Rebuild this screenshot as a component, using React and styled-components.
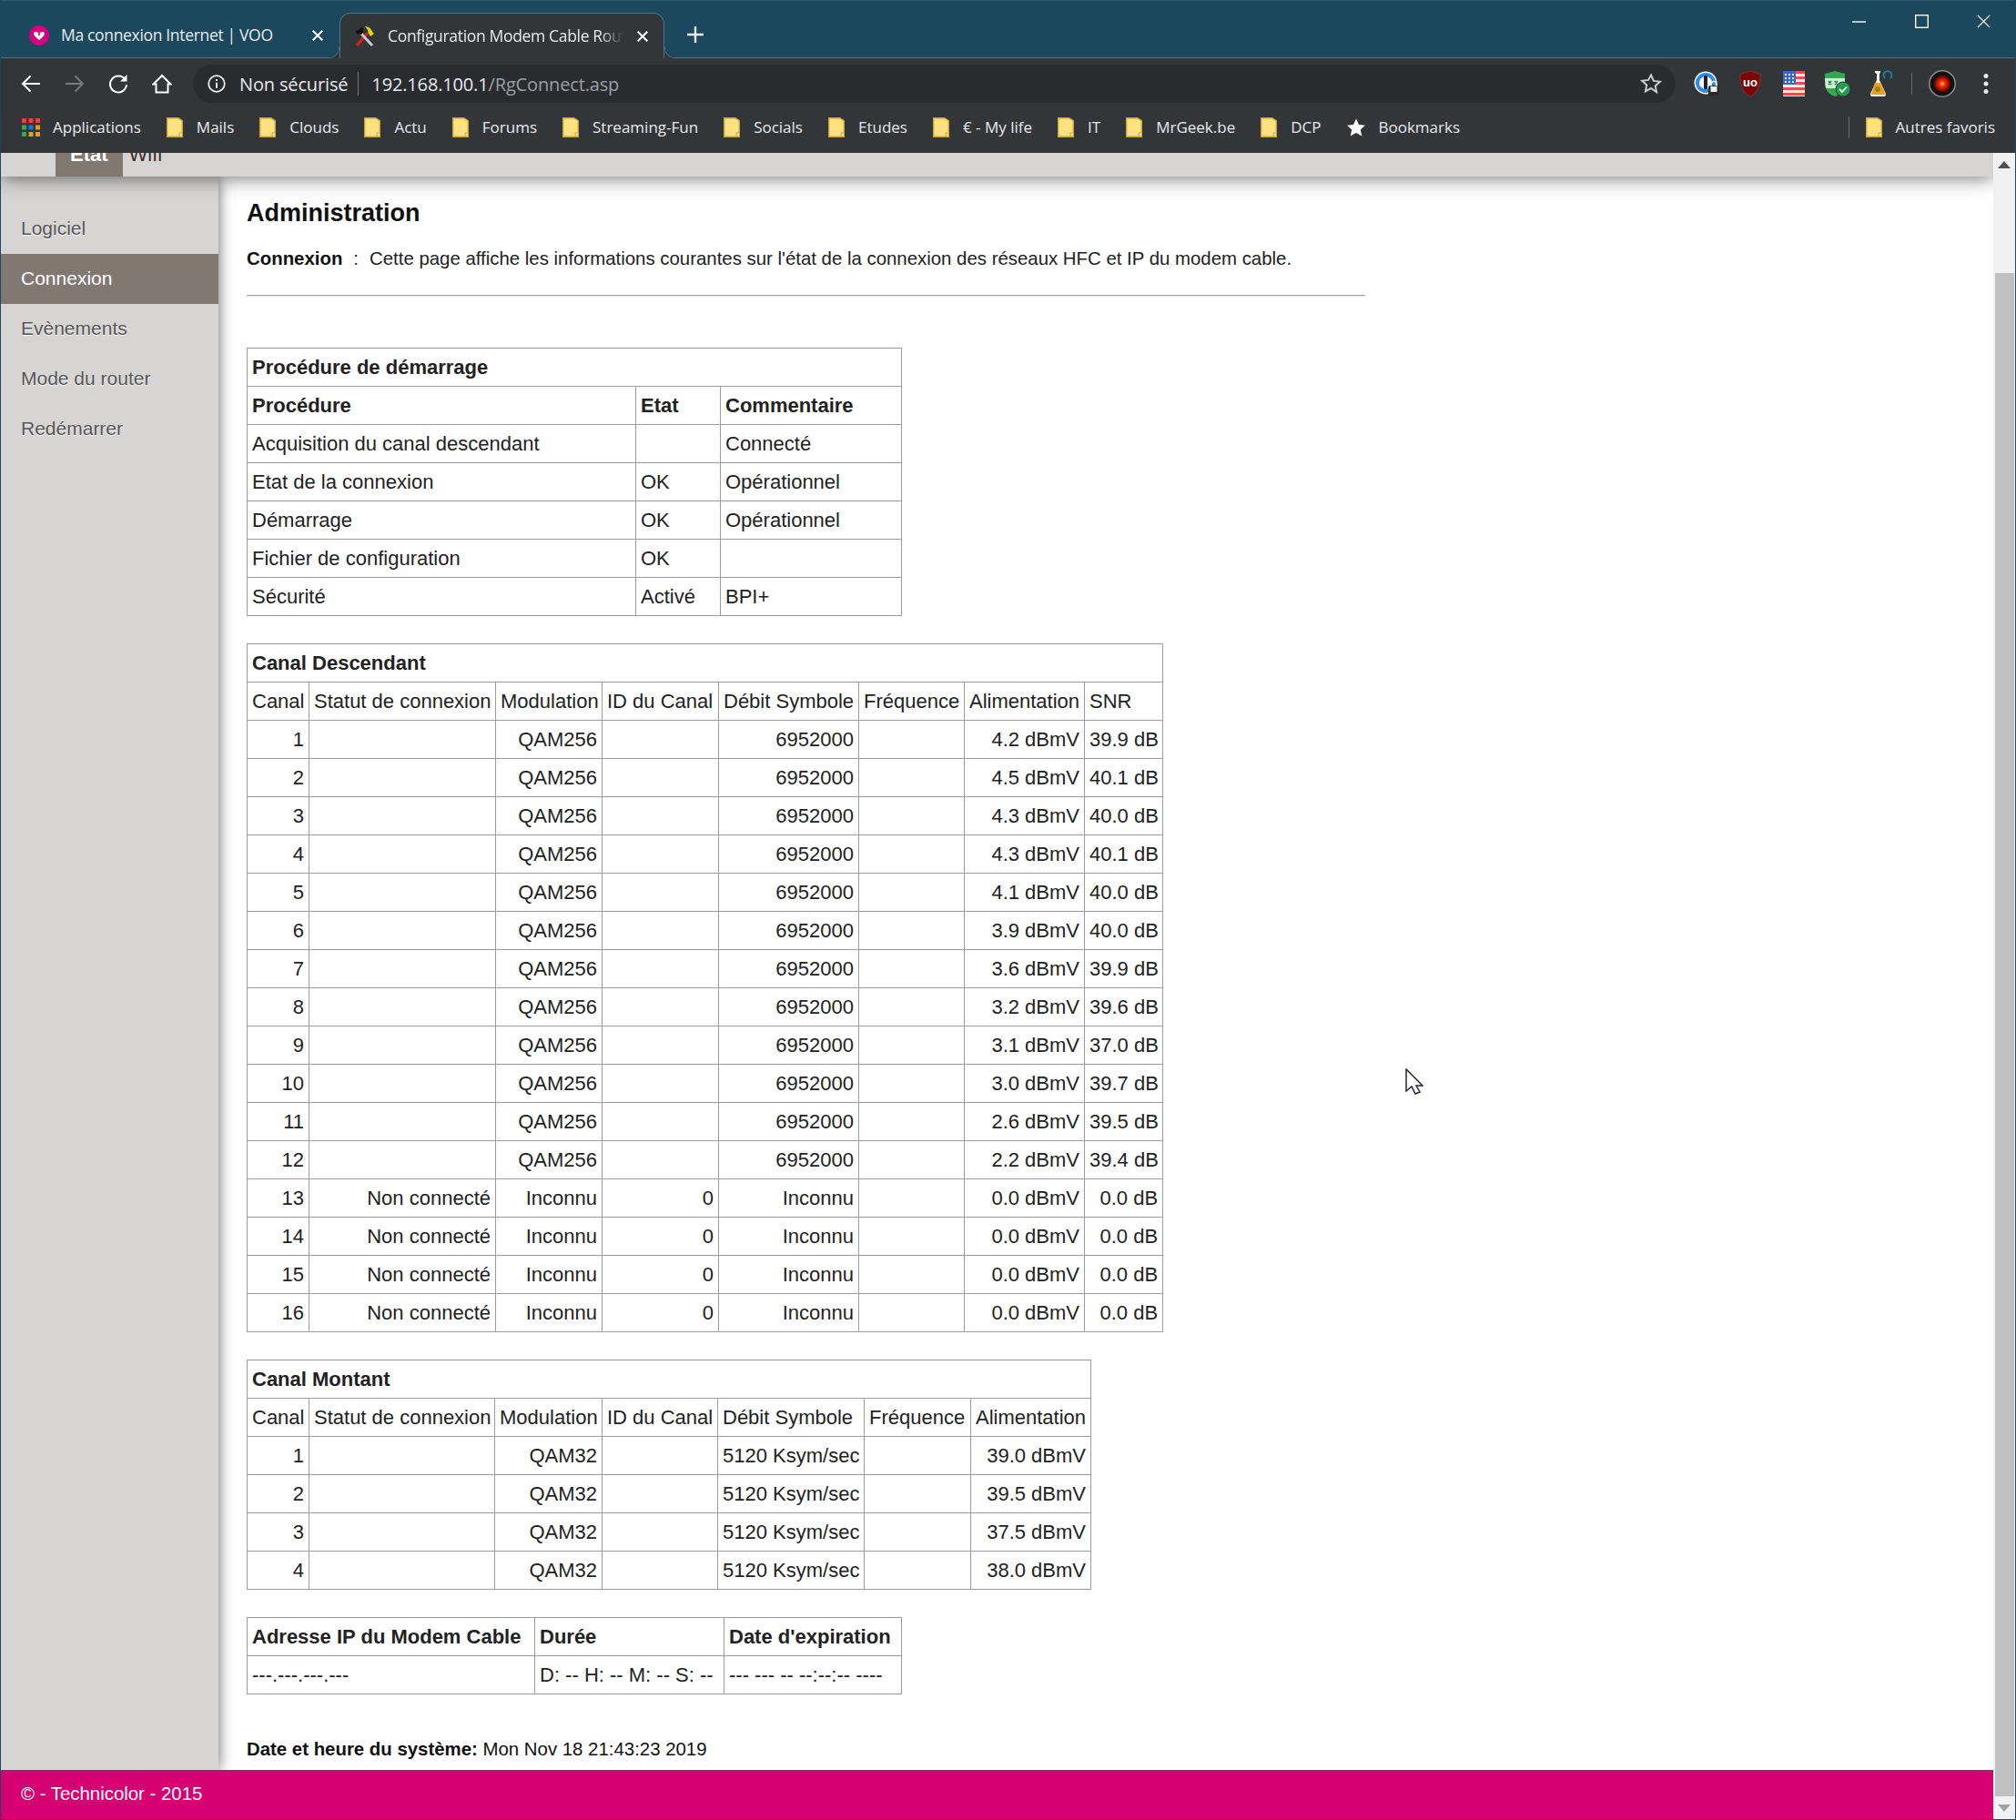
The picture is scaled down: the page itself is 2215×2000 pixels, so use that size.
import React from "react";
import styled, { createGlobalStyle } from "styled-components";

const GlobalStyle = createGlobalStyle`
  html, body {
    margin: 0;
    padding: 0;
    background: #fff;
    overflow: hidden;
  }
  * { box-sizing: border-box; }
`;

const Frame = styled.div`
  width: 2215px;
  height: 2000px;
  display: flex;
  flex-direction: column;
  border: 1px solid #1b485c;
  border-top: 0;
  position: relative;
  overflow: hidden;
`;

// ---- browser chrome

const TabStrip = styled.div`
  height: 64px;
  flex: none;
  display: flex;
  align-items: flex-end;
  padding-left: 15px;
  background: #1b485c;
  border-top: 1px solid #2f5a6e;
  border-bottom: 1px solid #4a7388;
  font-family: "Open Sans", "Noto Sans", sans-serif;
`;

const Tab = styled.div`
  width: 357px;
  height: 50px;
  margin-bottom: ${(p) => (p.$active ? "-1px" : "0")};
  display: flex;
  align-items: center;
  padding: 0 17px 0 15px;
  color: #e8eaed;
  position: relative;
  background: ${(p) => (p.$active ? "#323639" : "transparent")};
  border-radius: 12px 12px 0 0;
  border: ${(p) => (p.$active ? "1px solid #4a7388" : "1px solid transparent")};
  border-bottom: 0;

  ${(p) =>
    p.$active &&
    `
    &:before, &:after {
      content: "";
      position: absolute;
      bottom: 0;
      width: 12px;
      height: 12px;
    }
    &:before {
      left: -13px;
      background: radial-gradient(circle at 0 0, transparent 11px, #4a7388 11.5px, #323639 12.5px);
    }
    &:after {
      right: -13px;
      background: radial-gradient(circle at 100% 0, transparent 11px, #4a7388 11.5px, #323639 12.5px);
    }
  `}
`;

const TabTitle = styled.span`
  flex: 1;
  margin: 0 15px 0 13px;
  padding-bottom: 2px;
  font-size: 17.5px;
  letter-spacing: -0.33px;
  white-space: nowrap;
  overflow: hidden;
  -webkit-mask-image: ${(p) =>
    p.$fade ? "linear-gradient(90deg, #000 90%, transparent)" : "none"};
`;

const NewTab = styled.svg`
  width: 18px;
  height: 18px;
  margin: 0 0 16px 25px;
`;

const WindowControls = styled.div`
  margin-left: auto;
  align-self: flex-start;
  display: flex;
`;

const WindowButton = styled.div`
  width: 68.5px;
  height: 45px;
  display: flex;
  align-items: center;
  justify-content: center;
`;

const Toolbar = styled.div`
  height: 49px;
  flex: none;
  display: flex;
  padding: 7px 8px 0 9px;
  background: #323639;
  font-family: "Open Sans", "Noto Sans", sans-serif;
`;

const ToolButton = styled.div`
  width: 48px;
  height: 42px;
  flex: none;
  display: flex;
  align-items: center;
  justify-content: center;
`;

const Omnibox = styled.div`
  flex: 1;
  height: 42px;
  margin: 0 10px;
  padding: 0 15px 0 16px;
  display: flex;
  align-items: center;
  border-radius: 21px;
  background: #292c2e;
  font-size: 20px;
  letter-spacing: -0.15px;
  color: #e8eaed;
`;

const SecurityLabel = styled.span`
  margin-left: 15px;
`;

const UrlDivider = styled.span`
  width: 1px;
  height: 26px;
  margin: 0 14px 0 11px;
  background: #6f7377;
`;

const UrlPath = styled.span`
  color: #9aa0a6;
`;

const StarButton = styled.svg`
  width: 24px;
  height: 24px;
  margin-left: auto;
`;

const ToolSeparator = styled.span`
  width: 1px;
  height: 24px;
  margin: 9px 9px 0;
  background: #6a6e72;
`;

const BookmarkBar = styled.div`
  height: 55px;
  flex: none;
  display: flex;
  align-items: center;
  gap: 28px;
  padding: 0 22px 2px 23px;
  background: #323639;
  color: #e8eaed;
  font-family: "Open Sans", "Noto Sans", sans-serif;
  font-size: 17px;
`;

const Bookmark = styled.div`
  display: flex;
  align-items: center;
  gap: ${(p) => p.$gap || 15}px;
  white-space: nowrap;
`;

const OtherBookmarks = styled(Bookmark)`
  margin-left: auto;
  padding-left: 18px;
  height: 24px;
  border-left: 1px solid #6a6e72;
`;

// ---- modem page

const PageRow = styled.div`
  flex: 1;
  min-height: 0;
  display: flex;
  font-family: "Liberation Sans", Arial, sans-serif;
`;

const PageColumn = styled.div`
  flex: 1;
  min-width: 0;
  display: flex;
  flex-direction: column;
  overflow: hidden;
`;

const TopNav = styled.div`
  height: 26px;
  flex: none;
  display: flex;
  align-items: flex-end;
  padding-left: 60px;
  background: #d6d5d3;
  box-shadow: 0 0 22px rgba(0, 0, 0, 0.62);
  position: relative;
  z-index: 2;
`;

const TopNavItem = styled.div`
  height: 50px;
  flex: none;
  align-self: flex-end;
  display: flex;
  align-items: flex-end;
  padding: 0 ${(p) => (p.$active ? "16px" : "7px")} 12px;
  font-size: 22px;
  line-height: 24px;
  font-weight: ${(p) => (p.$active ? 700 : 400)};
  color: ${(p) => (p.$active ? "#fff" : "#3d2b28")};
  background: ${(p) => (p.$active ? "#817872" : "transparent")};
`;

const Body = styled.div`
  flex: 1;
  min-height: 0;
  display: flex;
`;

const Sidebar = styled.nav`
  width: 239px;
  flex: none;
  padding-top: 30px;
  background: #d6d5d3;
  box-shadow: 0 0 15px rgba(0, 0, 0, 0.6);
  position: relative;
  z-index: 1;
`;

const SideItem = styled.div`
  height: 55px;
  display: flex;
  align-items: center;
  padding: 0 0 2px 22px;
  font-size: 21px;
  color: ${(p) => (p.$active ? "#fff" : "#555")};
  background: ${(p) => (p.$active ? "#817872" : "transparent")};
  text-shadow: ${(p) => (p.$active ? "none" : "0 1px 1px #fff")};
`;

const Content = styled.main`
  flex: 1;
  min-width: 0;
  padding: 23px 0 0 31px;
  background: #fff;
`;

const Heading = styled.h1`
  margin: 0;
  font-size: 27px;
  line-height: 34px;
  font-weight: 700;
  color: #111;
`;

const Intro = styled.p`
  margin: 19px 0 0;
  font-size: 20.4px;
  line-height: 28px;
  color: #222;
  b {
    color: #111;
    margin-right: 12px;
  }
  span {
    margin-right: 12px;
  }
`;

const Rule = styled.hr`
  width: 1229px;
  height: 2px;
  margin: 26px 0 56px;
  border: 0;
  border-top: 1px solid #a5a5a5;
  border-bottom: 1px solid #e4e4e4;
`;

const DataTable = styled.table`
  border-collapse: collapse;
  table-layout: fixed;
  margin-bottom: ${(p) => (p.$last ? 0 : 30)}px;
  font-size: 22px;
  color: #222;
`;

const Column = styled.col`
  width: ${(p) => p.$w}px;
`;

const Cell = styled.td`
  height: 42px;
  padding: 0 5px;
  border: 1px solid #9c9c9c;
  white-space: nowrap;
  overflow: hidden;
  text-align: ${(p) => (p.$right ? "right" : "left")};
  font-weight: ${(p) => (p.$bold ? 700 : 400)};
`;

const SystemDate = styled.div`
  margin-top: 46px;
  font-size: 20.4px;
  line-height: 28px;
  color: #111;
`;

const Footer = styled.footer`
  height: 54px;
  flex: none;
  display: flex;
  align-items: center;
  padding: 0 0 2px 22px;
  background: #d50072;
  color: #fff;
  font-size: 20.4px;
  position: relative;
  z-index: 2;
`;

const Scrollbar = styled.div`
  width: 24px;
  flex: none;
  display: flex;
  flex-direction: column;
  align-items: center;
  background: #f1f1f1;
`;

const ScrollArrow = styled.div`
  height: 25px;
  flex: none;
  display: flex;
  align-items: center;
  justify-content: center;
`;

const ScrollThumb = styled.div`
  width: 21px;
  flex: 1;
  margin-top: 107px;
  background: #c1c1c1;
`;

const Pointer = styled.svg`
  position: absolute;
  left: 1543px;
  top: 1174px;
  width: 20px;
  height: 30px;
`;

// ---- drawings

const VooIcon = () => (
  <svg width="22" height="22" viewBox="0 0 22 22">
    <circle cx="11" cy="11" r="11" fill="#d5007f" />
    <path d="M5 8.5c1.5-2 4-2 6 .5 2-2.5 4.500-2.500 6-.5 0 2.500-3 5-6 7.500-3-2.500-6-5-6-7.500z" fill="#fff" />
    <path d="M9.500 8.500L11 12l1.500-3.500z" fill="#d5007f" />
  </svg>
);

const ToolsIcon = () => (
  <svg width="24" height="24" viewBox="0 0 24 24">
    <path d="M3 22L15 8" stroke="#e02020" strokeWidth="3" />
    <path d="M8 9l12 13" stroke="#c9c9c9" strokeWidth="3" />
    <path d="M2 6l5-2v-2l3 1v4l-2 3-3-1-2 1z" fill="#111" />
    <path d="M12 1c3 0 7 2 8 6l2 2-4 3-2-3-1-4c-1-2-2-3-3-4z" fill="#e8d60c" />
  </svg>
);

const CloseIcon = ({ size = 12, weight = 2 }) => (
  <svg width={size} height={size} viewBox="0 0 12 12">
    <path d="M.7.7l10.600 10.600M11.300.7L.7 11.300" stroke="#fff" strokeWidth={weight} fill="none" />
  </svg>
);

const ArrowIcon = styled.svg`
  transform: ${(p) => (p.$flip ? "scaleX(-1)" : "none")};
`;

const BackIcon = ({ flip, color = "#fff" }) => (
  <ArrowIcon $flip={flip} width="22" height="20" viewBox="0 0 22 20">
    <path d="M21 10H2M10.500 1.500L2 10l8.500 8.500" stroke={color} strokeWidth="2" fill="none" />
  </ArrowIcon>
);

const ReloadIcon = () => (
  <svg width="22" height="22" viewBox="0 0 22 22">
    <path d="M18.500 6.500A9 9 0 1 0 20 12" stroke="#fff" strokeWidth="2" fill="none" />
    <path d="M20.500 1v7.500H13z" fill="#fff" />
  </svg>
);

const HomeIcon = () => (
  <svg width="22" height="22" viewBox="0 0 22 22">
    <path d="M11 2L1.500 11.500H4.500V20.500H17.500V11.500H20.500z" stroke="#fff" strokeWidth="2" fill="none" />
  </svg>
);

const InfoIcon = () => (
  <svg width="20" height="20" viewBox="0 0 20 20">
    <circle cx="10" cy="10" r="8.800" stroke="#e8eaed" strokeWidth="1.800" fill="none" />
    <path d="M10 8.800v6M10 5v2" stroke="#e8eaed" strokeWidth="2" />
  </svg>
);

const FolderIcon = () => (
  <svg width="18" height="22" viewBox="0 0 18 22">
    <path d="M.7.700h12l4.600 3v17.600H.7z" fill="#fde27f" stroke="#c8a53c" strokeWidth="1.400" />
    <path d="M14 21v-4h3.500v4z" fill="#fde27f" stroke="#c8a53c" strokeWidth="1" />
  </svg>
);

const appColors = ["#ea4335", "#ea4335", "#ea4335", "#34a853", "#1a73e8", "#f29900", "#34a853", "#f29900", "#f29900"];

const AppsIcon = () => (
  <svg width="20" height="20" viewBox="0 0 20 20">
    {appColors.map((c, i) => (
      <rect key={i} x={(i % 3) * 7.5} y={Math.floor(i / 3) * 7.5} width="5" height="5" fill={c} />
    ))}
  </svg>
);

const SolidStar = () => (
  <svg width="20" height="20" viewBox="0 0 20 20">
    <path d="M10 .5l3 6.500 7 .8-5.200 4.800 1.500 7L10 16l-6.300 3.600 1.500-7L0 7.800l7-.8z" fill="#fff" />
  </svg>
);

const OnePasswordIcon = () => (
  <svg width="30" height="30" viewBox="0 0 30 30">
    <circle cx="14" cy="14" r="12.500" fill="#fff" />
    <circle cx="14" cy="14" r="9" fill="none" stroke="#2a8ce8" strokeWidth="4" />
    <rect x="12" y="6" width="4" height="15" rx="1" fill="#222" />
    <rect x="17" y="17" width="12" height="11" rx="2" fill="#2a2a2a" />
    <path d="M20 17.500v-2a3 3 0 0 1 6 0v2" stroke="#eee" strokeWidth="1.500" fill="none" />
    <rect x="19.500" y="18" width="7" height="6" fill="#eee" />
  </svg>
);

const UBlockIcon = () => (
  <svg width="24" height="28" viewBox="0 0 24 28">
    <path d="M12 0l11 3.500c.500 11-2 20-11 24.500C3 23.500.5 14.500 1 3.500z" fill="#7b0707" stroke="#8d3535" strokeWidth=".8" />
    <text x="12" y="17" textAnchor="middle" fontFamily="Liberation Sans, sans-serif" fontWeight="700" fontSize="13" fill="#fff">
      uo
    </text>
  </svg>
);

const FlagIcon = () => (
  <svg width="24" height="28" viewBox="0 0 24 28">
    <rect width="24" height="28" fill="#f4f0ef" />
    {[0, 6, 12, 18, 24].map((y) => (
      <rect key={y} y={y} width="24" height="3" fill="#e0534f" />
    ))}
    <rect width="14" height="15" fill="#3f64c8" />
    {[3, 7, 11].map((y) =>
      [2, 6, 10].map((x) => <rect key={x + "-" + y} x={x} y={y} width="2" height="2" fill="#dfe6ff" />)
    )}
  </svg>
);

const KeyShieldIcon = () => (
  <svg width="30" height="30" viewBox="0 0 30 30">
    <path d="M12 1l11 3v13c0 5-5 10-11 12C5 27 1 21 1 15V4z" fill="#34a853" />
    <path d="M1 9h22v11H2z" fill="#cfeed6" />
    <path d="M5 12l3 4M8 12l-3 4M12 12l3 4M15 12l-3 4" stroke="#1f8a3e" strokeWidth="1.500" />
    <circle cx="21" cy="21" r="8" fill="#1f9e4b" stroke="#323639" strokeWidth="1" />
    <path d="M17 21l3 3 5-5.500" stroke="#fff" strokeWidth="1.800" fill="none" />
  </svg>
);

const FlaskIcon = () => (
  <svg width="26" height="30" viewBox="0 0 26 30">
    <path d="M6 1h6v2l-1 1v7l7 15c.500 1.500-.500 3-2 3H3c-1.500 0-2.500-1.500-2-3l7-15V4L6 3z" fill="#f5f1e4" />
    <path d="M6 14h6l6 13H1.800z" fill="#eda020" />
    <circle cx="9" cy="21" r="3" fill="#8b8a20" />
    <path d="M17 9a4.500 4.500 0 1 1 6 0" stroke="#0f85b5" strokeWidth="1.800" fill="none" />
  </svg>
);

const HalIcon = () => (
  <svg width="30" height="30" viewBox="0 0 30 30">
    <defs>
      <radialGradient id="halEye">
        <stop offset="0" stopColor="#ffd23a" />
        <stop offset=".3" stopColor="#ff2a10" />
        <stop offset=".7" stopColor="#9a0f05" />
        <stop offset="1" stopColor="#200604" />
      </radialGradient>
    </defs>
    <circle cx="15" cy="15" r="14.200" fill="#111" stroke="#8e8e8e" strokeWidth="1.500" />
    <circle cx="15" cy="15" r="10" fill="url(#halEye)" />
  </svg>
);

const MenuDots = () => (
  <svg width="6" height="24" viewBox="0 0 6 24">
    <circle cx="3" cy="3.500" r="2.500" fill="#e8eaed" />
    <circle cx="3" cy="12" r="2.500" fill="#e8eaed" />
    <circle cx="3" cy="20.500" r="2.500" fill="#e8eaed" />
  </svg>
);

// ---- data

const bookmarks = ["Mails", "Clouds", "Actu", "Forums", "Streaming-Fun", "Socials", "Etudes", "€ - My life", "IT", "MrGeek.be", "DCP"];
const sideLinks = ["Logiciel", "Connexion", "Evènements", "Mode du router", "Redémarrer"];

const startup = [
  ["Acquisition du canal descendant", "", "Connecté"],
  ["Etat de la connexion", "OK", "Opérationnel"],
  ["Démarrage", "OK", "Opérationnel"],
  ["Fichier de configuration", "OK", ""],
  ["Sécurité", "Activé", "BPI+"],
];

const downPower = [
  ["4.2", "39.9"], ["4.5", "40.1"], ["4.3", "40.0"], ["4.3", "40.1"], ["4.1", "40.0"], ["3.9", "40.0"],
  ["3.6", "39.9"], ["3.2", "39.6"], ["3.1", "37.0"], ["3.0", "39.7"], ["2.6", "39.5"], ["2.2", "39.4"],
];

const downRows = [
  ...downPower.map(([p, s], i) => [i + 1, "", "QAM256", "", "6952000", "", p + " dBmV", s + " dB"]),
  ...[13, 14, 15, 16].map((n) => [n, "Non connecté", "Inconnu", "0", "Inconnu", "", "0.0 dBmV", "0.0 dB"]),
];

const upRows = ["39.0", "39.5", "37.5", "38.0"].map((p, i) => [i + 1, "", "QAM32", "", "5120 Ksym/sec", "", p + " dBmV"]);

const downHead = ["Canal", "Statut de connexion", "Modulation", "ID du Canal", "Débit Symbole", "Fréquence", "Alimentation", "SNR"];
const upHead = downHead.slice(0, 7);

const ColumnSet = ({ widths }) => (
  <colgroup>
    {widths.map((w, i) => (
      <Column key={i} $w={w} />
    ))}
  </colgroup>
);

const ChannelTable = ({ title, widths, head, rows }) => (
  <DataTable style={{ width: widths.reduce((a, b) => a + b, 0) }}>
    <ColumnSet widths={widths} />
    <tbody>
      <tr>
        <Cell $bold colSpan={widths.length}>{title}</Cell>
      </tr>
      <tr>
        {head.map((h) => (
          <Cell key={h}>{h}</Cell>
        ))}
      </tr>
      {rows.map((row) => (
        <tr key={row[0]}>
          {row.map((v, i) => (
            <Cell $right key={i}>{v}</Cell>
          ))}
        </tr>
      ))}
    </tbody>
  </DataTable>
);

const App = () => (
  <Frame>
    <GlobalStyle />
    <TabStrip>
      <Tab>
        <VooIcon />
        <TabTitle>Ma connexion Internet | VOO</TabTitle>
        <CloseIcon />
      </Tab>
      <Tab $active>
        <ToolsIcon />
        <TabTitle $fade>Configuration Modem Cable Router</TabTitle>
        <CloseIcon />
      </Tab>
      <NewTab viewBox="0 0 18 18">
        <path d="M9 0v18M0 9h18" stroke="#e8eaed" strokeWidth="2.400" />
      </NewTab>
      <WindowControls>
        <WindowButton>
          <svg width="15" height="2" viewBox="0 0 15 2"><path d="M0 1h15" stroke="#fff" strokeWidth="1.400" /></svg>
        </WindowButton>
        <WindowButton>
          <svg width="15" height="15" viewBox="0 0 15 15"><rect x=".7" y=".7" width="13.600" height="13.600" fill="none" stroke="#fff" strokeWidth="1.400" /></svg>
        </WindowButton>
        <WindowButton>
          <CloseIcon size={15} weight={1.100} />
        </WindowButton>
      </WindowControls>
    </TabStrip>

    <Toolbar>
      <ToolButton><BackIcon /></ToolButton>
      <ToolButton><BackIcon flip color="#777a7d" /></ToolButton>
      <ToolButton><ReloadIcon /></ToolButton>
      <ToolButton><HomeIcon /></ToolButton>
      <Omnibox>
        <InfoIcon />
        <SecurityLabel>Non sécurisé</SecurityLabel>
        <UrlDivider />
        <span>192.168.100.1</span>
        <UrlPath>/RgConnect.asp</UrlPath>
        <StarButton viewBox="0 0 24 24">
          <path d="M12 2.500l2.900 6.400 7 .8-5.200 4.700 1.400 6.900L12 17l-6.100 3.300 1.400-6.900-5.200-4.700 7-.8z" fill="none" stroke="#c8cacc" strokeWidth="2" />
        </StarButton>
      </Omnibox>
      <ToolButton><OnePasswordIcon /></ToolButton>
      <ToolButton><UBlockIcon /></ToolButton>
      <ToolButton><FlagIcon /></ToolButton>
      <ToolButton><KeyShieldIcon /></ToolButton>
      <ToolButton><FlaskIcon /></ToolButton>
      <ToolSeparator />
      <ToolButton><HalIcon /></ToolButton>
      <ToolButton><MenuDots /></ToolButton>
    </Toolbar>

    <BookmarkBar>
      <Bookmark $gap={14}>
        <AppsIcon />
        Applications
      </Bookmark>
      {bookmarks.map((b) => (
        <Bookmark key={b}>
          <FolderIcon />
          {b}
        </Bookmark>
      ))}
      <Bookmark>
        <SolidStar />
        Bookmarks
      </Bookmark>
      <OtherBookmarks>
        <FolderIcon />
        Autres favoris
      </OtherBookmarks>
    </BookmarkBar>

    <PageRow>
      <PageColumn>
        <TopNav>
          <TopNavItem $active>Etat</TopNavItem>
          <TopNavItem>Wifi</TopNavItem>
        </TopNav>
        <Body>
          <Sidebar>
            {sideLinks.map((l) => (
              <SideItem key={l} $active={l === "Connexion"}>{l}</SideItem>
            ))}
          </Sidebar>
          <Content>
            <Heading>Administration</Heading>
            <Intro>
              <b>Connexion</b>
              <span>:</span>
              Cette page affiche les informations courantes sur l'état de la connexion des réseaux HFC et IP du modem cable.
            </Intro>
            <Rule />

            <DataTable style={{ width: 719 }}>
              <ColumnSet widths={[427, 93, 199]} />
              <tbody>
                <tr>
                  <Cell $bold colSpan={3}>Procédure de démarrage</Cell>
                </tr>
                <tr>
                  <Cell $bold>Procédure</Cell>
                  <Cell $bold>Etat</Cell>
                  <Cell $bold>Commentaire</Cell>
                </tr>
                {startup.map((row) => (
                  <tr key={row[0]}>
                    {row.map((v, i) => (
                      <Cell key={i}>{v}</Cell>
                    ))}
                  </tr>
                ))}
              </tbody>
            </DataTable>

            <ChannelTable
              title="Canal Descendant"
              widths={[68, 205, 117, 128, 154, 116, 132, 86]}
              head={downHead}
              rows={downRows}
            />
            <ChannelTable
              title="Canal Montant"
              widths={[68, 204, 118, 127, 161, 117, 132]}
              head={upHead}
              rows={upRows}
            />

            <DataTable $last style={{ width: 719 }}>
              <ColumnSet widths={[316, 208, 195]} />
              <tbody>
                <tr>
                  <Cell $bold>Adresse IP du Modem Cable</Cell>
                  <Cell $bold>Durée</Cell>
                  <Cell $bold>Date d'expiration</Cell>
                </tr>
                <tr>
                  <Cell>---.---.---.---</Cell>
                  <Cell>D: -- H: -- M: -- S: --</Cell>
                  <Cell>--- --- -- --:--:-- ----</Cell>
                </tr>
              </tbody>
            </DataTable>

            <SystemDate>
              <b>Date et heure du système:</b> Mon Nov 18 21:43:23 2019
            </SystemDate>
          </Content>
        </Body>
        <Footer>© - Technicolor - 2015</Footer>
      </PageColumn>
      <Scrollbar>
        <ScrollArrow>
          <svg width="14" height="8" viewBox="0 0 14 8"><path d="M7 0l7 8H0z" fill="#505050" /></svg>
        </ScrollArrow>
        <ScrollThumb />
        <ScrollArrow>
          <svg width="14" height="8" viewBox="0 0 14 8"><path d="M7 8L0 0h14z" fill="#a3a3a3" /></svg>
        </ScrollArrow>
      </Scrollbar>
    </PageRow>

    <Pointer viewBox="0 0 20 30">
      <path d="M1 1v24l6-5 4 8 5-2-4-7h7z" fill="#fff" stroke="#25253a" strokeWidth="1.500" />
    </Pointer>
  </Frame>
);

export default App;
